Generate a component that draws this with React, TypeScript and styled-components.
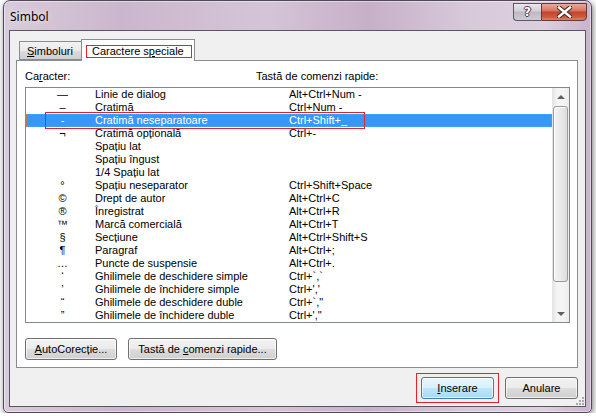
import React from "react";
import styled, { createGlobalStyle } from "styled-components";

const GlobalStyle = createGlobalStyle`
  html, body {
    margin: 0;
    background: #ffffff;
  }
  body {
    font-family: "Liberation Sans", Arial, sans-serif;
    font-size: 11px;
    color: #000;
  }
`;

type Row = [string, string, string];

const rows: Row[] = [
  ["—", "Linie de dialog", "Alt+Ctrl+Num -"],
  ["–", "Cratimă", "Ctrl+Num -"],
  ["-", "Cratimă neseparatoare", "Ctrl+Shift+_"],
  ["¬", "Cratimă opțională", "Ctrl+-"],
  ["", "Spațiu lat", ""],
  ["", "Spațiu îngust", ""],
  ["", "1/4 Spațiu lat", ""],
  ["°", "Spațiu neseparator", "Ctrl+Shift+Space"],
  ["©", "Drept de autor", "Alt+Ctrl+C"],
  ["®", "Înregistrat", "Alt+Ctrl+R"],
  ["™", "Marcă comercială", "Alt+Ctrl+T"],
  ["§", "Secțiune", "Alt+Ctrl+Shift+S"],
  ["¶", "Paragraf", "Alt+Ctrl+;"],
  ["…", "Puncte de suspensie", "Alt+Ctrl+."],
  ["‘", "Ghilimele de deschidere simple", "Ctrl+`,`"],
  ["’", "Ghilimele de închidere simple", "Ctrl+','"],
  ["“", "Ghilimele de deschidere duble", "Ctrl+`,\""],
  ["”", "Ghilimele de închidere duble", "Ctrl+',\""],
];

const SELECTED = 2;

const App = () => {
  return (
    <>
      <GlobalStyle />
      <Window>
        <TitleBar>
          <Title>Simbol</Title>
          <CaptionButtons>
            <HelpButton>?</HelpButton>
            <CloseButton>
              <svg width="15" height="12" viewBox="0 0 15 12">
                <path
                  d="M2 1.5 L13 10.5 M13 1.5 L2 10.5"
                  stroke="#3a2626"
                  strokeWidth="4.4"
                  strokeLinecap="square"
                />
                <path
                  d="M2 1.5 L13 10.5 M13 1.5 L2 10.5"
                  stroke="#ffffff"
                  strokeWidth="2.4"
                  strokeLinecap="square"
                />
              </svg>
            </CloseButton>
          </CaptionButtons>
        </TitleBar>

        <Client>
          <TabStrip>
            <Tab>
              <u>S</u>imboluri
            </Tab>
            <Tab $active>
              <Marked>
                Caractere s<u>p</u>eciale
              </Marked>
            </Tab>
          </TabStrip>

          <Panel>
            <HeaderRow>
              <span>
                Ca<u>r</u>acter:
              </span>
              <span>Tastă de comenzi rapide:</span>
            </HeaderRow>

            <ListBox>
              <Rows>
                {rows.map(([ch, name, keys], i) => (
                  <ListRow key={name} $selected={i === SELECTED}>
                    <CharCell>{ch}</CharCell>
                    <span>{name}</span>
                    <span>{keys}</span>
                    {i === SELECTED && <RowMark />}
                  </ListRow>
                ))}
              </Rows>
              <ScrollBar>
                <ArrowBox>
                  <Arrow />
                </ArrowBox>
                <Track>
                  <Thumb />
                </Track>
                <ArrowBox>
                  <Arrow $down />
                </ArrowBox>
              </ScrollBar>
            </ListBox>

            <PanelButtons>
              <Button $width={92}>
                <u>A</u>utoCorecție...
              </Button>
              <Button $width={149}>
                Tastă de <u>c</u>omenzi rapide...
              </Button>
            </PanelButtons>
          </Panel>

          <Footer>
            <Button $default $marked>
              <u>I</u>nserare
            </Button>
            <Button>Anulare</Button>
          </Footer>
          <Grip>
            <svg width="10" height="10" viewBox="0 0 10 10">
              <g fill="#a8a8a8">
                <rect x="8" y="2" width="2" height="2" />
                <rect x="5" y="5" width="2" height="2" />
                <rect x="8" y="5" width="2" height="2" />
                <rect x="2" y="8" width="2" height="2" />
                <rect x="5" y="8" width="2" height="2" />
                <rect x="8" y="8" width="2" height="2" />
              </g>
            </svg>
          </Grip>
        </Client>
      </Window>
    </>
  );
};

export default App;

const Window = styled.div`
  margin-left: 3px;
  width: 589px;
  height: 413px;
  box-sizing: border-box;
  display: flex;
  flex-direction: column;
  padding: 0 5px 5px;
  border: 1px solid #52485a;
  border-radius: 7px 7px 5px 5px;
  background: linear-gradient(
    90deg,
    #d8cbda 0%,
    #cbb7cd 20%,
    #d5c4d7 45%,
    #c6b0c8 62%,
    #d9cadb 80%,
    #dccfde 92%,
    #c9b4cb 100%
  );
  box-shadow: 1px 2px 6px rgba(0, 0, 0, 0.55),
    inset 0 0 0 1px rgba(255, 255, 255, 0.45);
`;

const TitleBar = styled.div`
  height: 29px;
  flex: none;
  display: flex;
  justify-content: space-between;
  align-items: flex-start;
`;

const Title = styled.div`
  margin: 8px 0 0 1px;
  font-family: "Noto Sans", "Open Sans", sans-serif;
  font-size: 12px;
  line-height: 16px;
  color: #000;
  text-shadow: 0 0 6px rgba(255, 255, 255, 0.9);
`;

const CaptionButtons = styled.div`
  display: flex;
  margin-top: 2px;
  margin-right: -1px;
`;

const HelpButton = styled.div`
  width: 28px;
  height: 18px;
  box-sizing: border-box;
  display: flex;
  align-items: center;
  justify-content: center;
  border: 1px solid #5e5866;
  border-right: none;
  border-radius: 0 0 0 4px;
  background: linear-gradient(#ebe7ed 0%, #d3ced6 45%, #bdb7c2 50%, #cfcbd3 100%);
  font-family: "DejaVu Sans", sans-serif;
  font-weight: bold;
  font-size: 12px;
  color: #ffffff;
  text-shadow: 1px 0 0 #404050, -1px 0 0 #404050, 0 1px 0 #404050,
    0 -1px 0 #404050;
`;

const CloseButton = styled.div`
  width: 46px;
  height: 18px;
  box-sizing: border-box;
  display: flex;
  align-items: center;
  justify-content: center;
  border: 1px solid #5e3a38;
  border-radius: 0 0 4px 0;
  background: linear-gradient(#e9a99b 0%, #d77a66 40%, #c5432b 52%, #cc5a3e 80%, #e0806a 100%);
`;

const Client = styled.div`
  flex: 1;
  position: relative;
  display: flex;
  flex-direction: column;
  padding: 8px 7px 0 6px;
  border: 1px solid #5b5562;
  background: #f0f0f0;
`;

const TabStrip = styled.div`
  height: 21px;
  display: flex;
  align-items: flex-end;
  padding-left: 3px;
  position: relative;
  z-index: 1;
`;

const Tab = styled.div<{ $active?: boolean }>`
  box-sizing: border-box;
  height: ${(p) => (p.$active ? "22px" : "19px")};
  margin-bottom: ${(p) => (p.$active ? "-1px" : "0")};
  margin-left: ${(p) => (p.$active ? "-1px" : "0")};
  width: ${(p) => (p.$active ? "114px" : "63px")};
  padding: ${(p) => (p.$active ? "5px 0 0 4px" : "3px 0 0 7px")};
  border: 1px solid #898c95;
  border-bottom: ${(p) => (p.$active ? "none" : "1px solid #898c95")};
  background: ${(p) =>
    p.$active
      ? "#ffffff"
      : "linear-gradient(#f2f2f2 0%, #ebebeb 50%, #dddddd 51%, #cfcfcf 100%)"};
  line-height: 13px;
`;

const Marked = styled.span`
  display: inline-block;
  box-sizing: border-box;
  height: 13px;
  width: 106px;
  padding-left: 5px;
  border: 1px solid #e8212b;
  line-height: 11px;
`;

const Panel = styled.div`
  height: 308px;
  box-sizing: border-box;
  display: flex;
  flex-direction: column;
  padding: 8px 7px 0 8px;
  border: 1px solid #898c95;
  background: #ffffff;
`;

const HeaderRow = styled.div`
  height: 18px;
  display: grid;
  grid-template-columns: 231px 1fr;
  line-height: 14px;
`;

const ListBox = styled.div`
  height: 236px;
  box-sizing: border-box;
  display: flex;
  border: 1px solid #828790;
  background: #ffffff;
`;

const Rows = styled.div`
  flex: 1;
  display: flex;
  flex-direction: column;
`;

const ListRow = styled.div<{ $selected?: boolean }>`
  position: relative;
  height: 13px;
  display: grid;
  grid-template-columns: 69px 194px 1fr;
  line-height: 13px;
  white-space: nowrap;
  color: ${(p) => (p.$selected ? "#ffffff" : "#000000")};
  background: ${(p) => (p.$selected ? "#3399ff" : "transparent")};
  outline: ${(p) => (p.$selected ? "1px dotted #b7895f" : "none")};
  outline-offset: -1px;
`;

const CharCell = styled.span`
  text-align: center;
  padding-left: 4px;
`;

const RowMark = styled.span`
  position: absolute;
  left: 19px;
  top: -2px;
  width: 320px;
  height: 17px;
  box-sizing: border-box;
  border: 1px solid #d9262e;
`;

const ScrollBar = styled.div`
  width: 17px;
  display: flex;
  flex-direction: column;
  background: linear-gradient(90deg, #e3e3e3 0%, #f4f4f4 30%, #f4f4f4 70%, #ececec 100%);
`;

const ArrowBox = styled.div`
  height: 17px;
  display: flex;
  align-items: center;
  justify-content: center;
`;

const Arrow = styled.div<{ $down?: boolean }>`
  width: 0;
  height: 0;
  border-left: 4px solid transparent;
  border-right: 4px solid transparent;
  ${(p) =>
    p.$down ? "border-top: 4px solid #606060;" : "border-bottom: 4px solid #606060;"}
`;

const Track = styled.div`
  flex: 1;
  padding: 1px 1px 0;
`;

const Thumb = styled.div`
  height: 176px;
  box-sizing: border-box;
  border: 1px solid #9a9a9a;
  border-radius: 3px;
  background: linear-gradient(90deg, #f4f4f4 0%, #eaeaea 50%, #dcdcdc 100%);
  box-shadow: inset 1px 1px 0 #ffffff;
`;

const PanelButtons = styled.div`
  display: flex;
  gap: 11px;
  margin-top: 15px;
`;

const Button = styled.button<{
  $default?: boolean;
  $marked?: boolean;
  $width?: number;
}>`
  position: relative;
  width: ${(p) => p.$width ?? 73}px;
  height: 22px;
  box-sizing: border-box;
  padding: 0;
  font-family: "Liberation Sans", Arial, sans-serif;
  font-size: 11px;
  line-height: 18px;
  color: #000;
  border: 1px solid ${(p) => (p.$default ? "#3c7fb1" : "#707070")};
  border-radius: 3px;
  background: ${(p) =>
    p.$default
      ? "linear-gradient(#eaf6fd 0%, #d9f0fc 50%, #bee6fd 51%, #a7d9f5 100%)"
      : "linear-gradient(#f2f2f2 0%, #ebebeb 50%, #dddddd 51%, #cfcfcf 100%)"};
  box-shadow: inset 0 0 0 1px rgba(255, 255, 255, 0.65);

  &::after {
    content: "";
    display: ${(p) => (p.$marked ? "block" : "none")};
    position: absolute;
    left: -6px;
    right: -6px;
    top: -5px;
    bottom: -5px;
    border: 1px solid #e8212b;
  }
`;

const Footer = styled.div`
  display: flex;
  justify-content: flex-end;
  gap: 11px;
  margin-top: 9px;
`;

const Grip = styled.div`
  position: absolute;
  right: 1px;
  bottom: 1px;
  width: 10px;
  height: 10px;
  line-height: 0;
`;
